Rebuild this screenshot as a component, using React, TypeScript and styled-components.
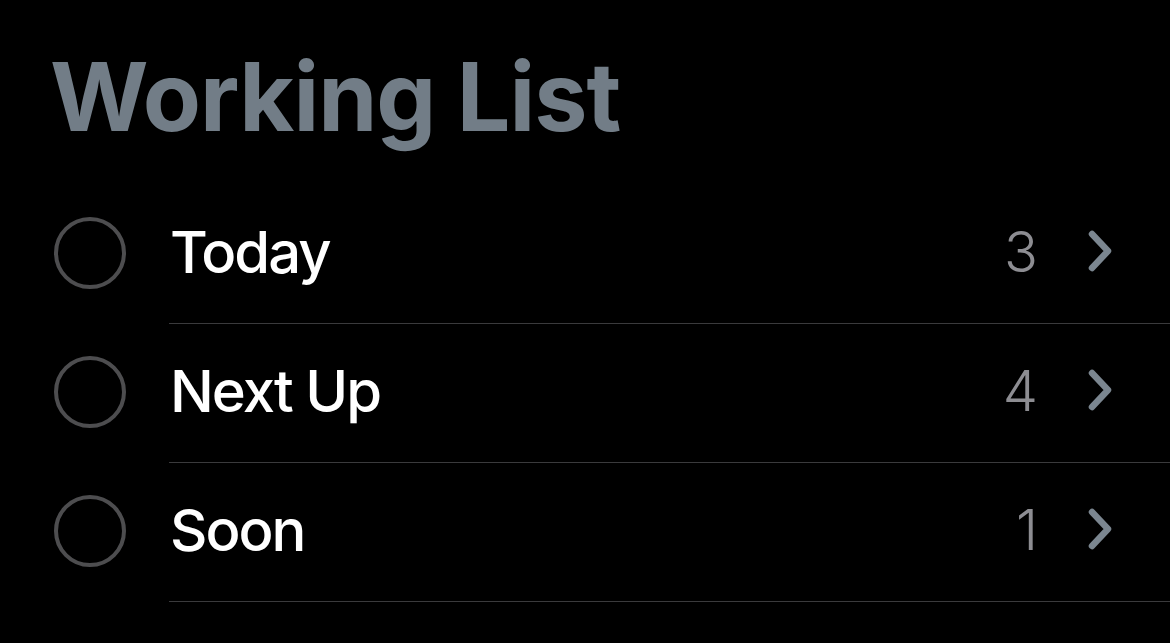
import React from 'react';
import styled, { createGlobalStyle } from 'styled-components';

const GlobalStyle = createGlobalStyle`
  html, body {
    margin: 0;
    padding: 0;
    background: #000;
  }
  body {
    font-family: Inter, "Noto Sans", "Liberation Sans", sans-serif;
    -webkit-font-smoothing: antialiased;
  }
`;

const Screen = styled.div`
  width: 1170px;
  height: 643px;
  background: #000;
  overflow: hidden;
  display: flex;
  flex-direction: column;
`;

const Header = styled.header`
  height: 185px;
  padding-left: 50px;
  display: flex;
  align-items: flex-start;
`;

const Title = styled.h1`
  margin: 0;
  padding-top: 45px;
  font-size: 95px;
  line-height: 1.1;
  font-weight: 700;
  letter-spacing: -1px;
  color: #727d87;
`;

const List = styled.ul`
  list-style: none;
  margin: 0;
  padding: 0 0 0 54px;
`;

const Row = styled.li`
  display: flex;
  align-items: stretch;
  height: 139px;
`;

const CheckCell = styled.div`
  width: 115px;
  display: flex;
  align-items: center;
  flex-shrink: 0;
`;

const Circle = styled.span`
  width: 72px;
  height: 72px;
  box-sizing: border-box;
  border: 4px solid #4d4d4f;
  border-radius: 50%;
  margin-top: -4px;
`;

const Content = styled.div`
  flex: 1;
  display: flex;
  align-items: center;
  border-bottom: 1.5px solid #3a3a3c;
  padding-right: 58px;
  padding-left: 1px;
`;

const Label = styled.span`
  flex: 1;
  font-size: 58px;
  font-weight: 500;
  color: #fff;
  letter-spacing: -2px;
  margin-top: -4px;
`;

const Count = styled.span`
  font-size: 56px;
  font-weight: 300;
  color: #8d8d92;
  margin-right: 50px;
  margin-top: -4px;
`;

const Chevron = () => (
  <svg width="24" height="42" viewBox="0 0 24 42" style={{ marginTop: -6 }}>
    <path
      d="M4 4 L20 21 L4 38"
      fill="none"
      stroke="#7b8690"
      strokeWidth="6.5"
      strokeLinecap="round"
      strokeLinejoin="round"
    />
  </svg>
);

const items = [
  { label: 'Today', count: 3 },
  { label: 'Next Up', count: 4 },
  { label: 'Soon', count: 1 },
];

export default function App() {
  return (
    <>
      <GlobalStyle />
      <Screen>
        <Header>
          <Title>Working List</Title>
        </Header>
        <List>
          {items.map((item) => (
            <Row key={item.label}>
              <CheckCell>
                <Circle />
              </CheckCell>
              <Content>
                <Label>{item.label}</Label>
                <Count>{item.count}</Count>
                <Chevron />
              </Content>
            </Row>
          ))}
        </List>
      </Screen>
    </>
  );
}
